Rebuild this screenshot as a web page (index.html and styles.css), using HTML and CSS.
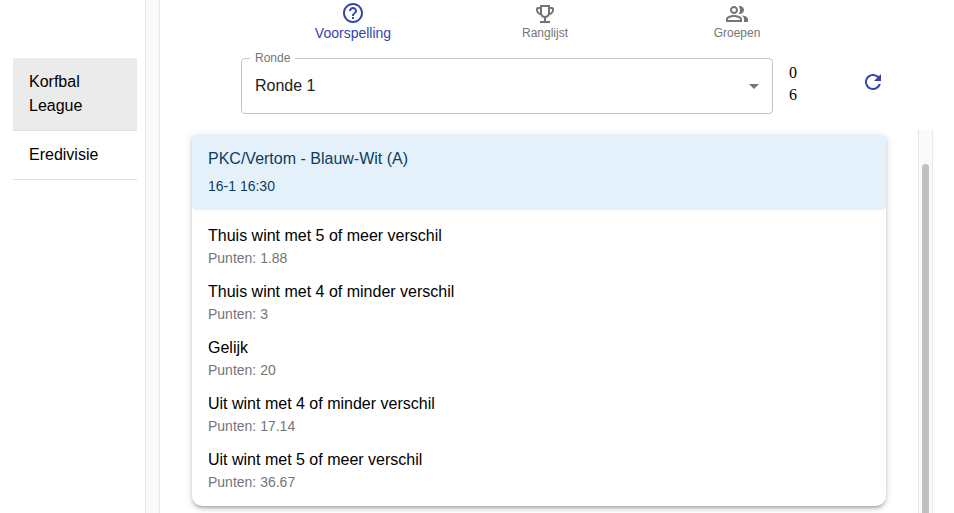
FILE: index.html
```html
<!DOCTYPE html>
<html lang="nl">
<head>
<meta charset="utf-8">
<meta name="viewport" content="width=device-width, initial-scale=1">
<title>Voorspelling</title>
<link rel="stylesheet" href="styles.css">
</head>
<body>
<div class="app">
  <nav class="sidebar">
    <a class="league league-active" href="#korfbal">Korfbal League</a>
    <a class="league" href="#eredivisie">Eredivisie</a>
  </nav>
  <div class="track"></div>
  <main class="main">
    <nav class="tabs">
      <button class="tab tab-active" type="button">
        <svg class="icon" viewBox="0 0 24 24"><path d="M11 18h2v-2h-2v2zm1-16C6.480 2 2 6.480 2 12s4.480 10 10 10 10-4.480 10-10S17.520 2 12 2zm0 18c-4.410 0-8-3.590-8-8s3.590-8 8-8 8 3.590 8 8-3.590 8-8 8zm0-14c-2.210 0-4 1.790-4 4h2c0-1.100.900-2 2-2s2 .900 2 2c0 2-3 1.750-3 5h2c0-2.250 3-2.500 3-5 0-2.210-1.790-4-4-4z"/></svg>
        <span>Voorspelling</span>
      </button>
      <button class="tab" type="button">
        <svg class="icon" viewBox="0 0 24 24"><path d="M19 5h-2V3H7v2H5c-1.100 0-2 .9-2 2v1c0 2.550 1.920 4.630 4.390 4.940.63 1.500 1.980 2.630 3.610 2.960V19H7v2h10v-2h-4v-3.100c1.630-.33 2.980-1.460 3.610-2.960C19.080 12.630 21 10.550 21 8V7c0-1.100-.9-2-2-2zM5 8V7h2v3.820C5.840 10.400 5 9.300 5 8zm7 6c-1.650 0-3-1.350-3-3V5h6v6c0 1.650-1.350 3-3 3zm7-6c0 1.300-.84 2.400-2 2.820V7h2v1z"/></svg>
        <span>Ranglijst</span>
      </button>
      <button class="tab" type="button">
        <svg class="icon" viewBox="0 0 24 24"><path d="M16.670 13.130C18.040 14.060 19 15.320 19 17v3h4v-3c0-2.180-3.570-3.470-6.330-3.870zM15 12c2.210 0 4-1.790 4-4s-1.790-4-4-4c-.47 0-.91.1-1.330.24C14.500 5.270 15 6.580 15 8s-.5 2.730-1.330 3.760c.42.14.86.24 1.330.24zM9 12c2.210 0 4-1.790 4-4s-1.790-4-4-4-4 1.790-4 4 1.790 4 4 4zm0-6c1.100 0 2 .9 2 2s-.9 2-2 2-2-.9-2-2 .9-2 2-2zM9 13c-2.670 0-8 1.340-8 4v3h16v-3c0-2.660-5.330-4-8-4zm6 5H3v-.99C3.200 16.290 6.300 15 9 15s5.800 1.290 6 2v1z"/></svg>
        <span>Groepen</span>
      </button>
    </nav>
    <div class="toolbar">
      <div class="field">
        <label class="field-label" for="ronde">Ronde</label>
        <select class="field-select" id="ronde">
          <option>Ronde 1</option>
        </select>
        <svg class="field-arrow" viewBox="0 0 24 24"><path d="M7 10l5 5 5-5z"/></svg>
      </div>
      <div class="counts"><div>0</div><div>6</div></div>
      <button class="refresh" type="button" aria-label="Vernieuwen">
        <svg class="icon" viewBox="0 0 24 24"><path d="M17.650 6.350C16.200 4.900 14.210 4 12 4c-4.420 0-7.990 3.580-7.990 8s3.570 8 7.990 8c3.730 0 6.840-2.550 7.730-6h-2.080c-.82 2.330-3.040 4-5.650 4-3.310 0-6-2.690-6-6s2.690-6 6-6c1.660 0 3.140.69 4.220 1.780L13 11h7V4l-2.350 2.350z"/></svg>
      </button>
    </div>
    <div class="content">
      <section class="card">
        <header class="card-head">
          <div class="match">PKC/Vertom - Blauw-Wit (A)</div>
          <div class="time">16-1 16:30</div>
        </header>
        <ul class="options">
          <li class="option"><div>Thuis wint met 5 of meer verschil</div><div class="points">Punten: 1.88</div></li>
          <li class="option"><div>Thuis wint met 4 of minder verschil</div><div class="points">Punten: 3</div></li>
          <li class="option"><div>Gelijk</div><div class="points">Punten: 20</div></li>
          <li class="option"><div>Uit wint met 4 of minder verschil</div><div class="points">Punten: 17.14</div></li>
          <li class="option"><div>Uit wint met 5 of meer verschil</div><div class="points">Punten: 36.67</div></li>
        </ul>
      </section>
      <div class="track track-scroll"><div class="thumb"></div></div>
    </div>
  </main>
</div>
</body>
</html>
```
FILE: styles.css
```css
* {
  box-sizing: border-box;
}

body {
  margin: 0;
  background: #fff;
  color: #000;
  font-family: "Liberation Sans", Arial, sans-serif;
  font-size: 16px;
  line-height: 24px;
}

button {
  padding: 0;
  border: 0;
  background: none;
  font: inherit;
  color: inherit;
}

.app {
  display: flex;
  min-height: 100vh;
  padding-right: 21px;
}

.sidebar {
  flex: 0 0 145px;
  padding: 58px 8px 0 13px;
}

.league {
  display: block;
  padding: 12px 16px;
  border-bottom: 1px solid #e0e0e0;
  color: #000;
  text-decoration: none;
}

.league-active {
  background: #ebebeb;
}

.track {
  flex: 0 0 15px;
  border: solid #e8e8e8;
  border-width: 0 1px;
  background: #fafafa;
}

.main {
  flex: 1;
  min-width: 0;
  display: flex;
  flex-direction: column;
}

.tabs {
  display: grid;
  grid-template-columns: repeat(3, 1fr);
  padding: 1px 100px 0 97px;
  height: 58px;
}

.tab {
  display: flex;
  flex-direction: column;
  align-items: center;
  padding-top: 1px;
  color: #757575;
  font-size: 12px;
  line-height: 14px;
}

.tab-active {
  padding-top: 0;
  color: #3344ab;
  font-size: 14px;
  line-height: 16px;
}

.icon {
  display: block;
  width: 24px;
  height: 24px;
  fill: currentColor;
}

.toolbar {
  display: flex;
  padding: 0 36px 0 81px;
}

.field {
  position: relative;
  flex: 1;
}

.field-label {
  position: absolute;
  top: -8px;
  left: 9px;
  padding: 0 5px;
  background: #fff;
  color: #757575;
  font-size: 12px;
  line-height: 16px;
}

.field-select {
  display: block;
  width: 100%;
  height: 56px;
  padding: 0 32px 0 13px;
  border: 1px solid #c4c4c4;
  border-radius: 4px;
  appearance: none;
  background: #fff;
  color: #212121;
  font: inherit;
}

.field-arrow {
  position: absolute;
  top: 16px;
  right: 7px;
  width: 24px;
  height: 24px;
  fill: #757575;
  pointer-events: none;
}

.counts {
  width: 60px;
  margin-left: 16px;
  padding-top: 4px;
  font-family: "Liberation Serif", "Times New Roman", serif;
  line-height: 22px;
}

.refresh {
  width: 48px;
  height: 48px;
  padding: 12px;
  color: #3344ab;
}

.content {
  flex: 1;
  display: flex;
  align-items: flex-start;
  margin-top: 16px;
}

.card {
  flex: 1;
  margin: 5px 32px 7px;
  border-radius: 4px 4px 10px 10px;
  background: #fff;
  box-shadow: 0 3px 3px -2px rgba(0, 0, 0, 0.2), 0 3px 4px 0 rgba(0, 0, 0, 0.14), 0 1px 8px 0 rgba(0, 0, 0, 0.12);
}

.card-head {
  padding: 12px 16px 14px;
  border-radius: 4px;
  background: #e4f1fb;
  color: #0d3c61;
}

.time {
  margin-top: 5px;
  font-size: 14px;
  line-height: 20px;
}

.options {
  margin: 0;
  padding: 8px 0;
  list-style: none;
}

.option {
  padding: 6px 16px;
}

.points {
  color: #757575;
  font-size: 14px;
  line-height: 20px;
}

.track-scroll {
  align-self: stretch;
  padding: 34px 3px 0;
  display: flex;
}

.thumb {
  flex: 1;
  border-radius: 4px 4px 0 0;
  background: #c1c1c1;
}
```
